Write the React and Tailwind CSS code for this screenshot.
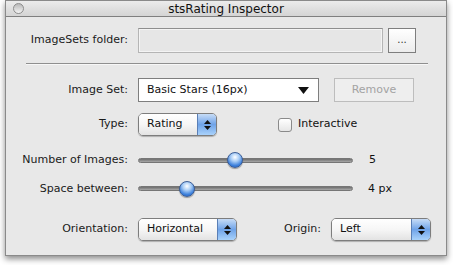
import React from "react";

const font = { fontFamily: '"DejaVu Sans", "Liberation Sans", sans-serif' };

const Label = ({ children, w = "w-[132px]" }) => (
  <div className={`${w} shrink-0 whitespace-nowrap text-right pr-[10px] text-[11px] text-[#1a1a1a]`}>{children}</div>
);

const AquaPopup = ({ value, w }) => (
  <div className={`${w} h-[23px] shrink-0 flex rounded-[5px] border border-[#7d7d7d] overflow-hidden shadow-[0_1px_1px_rgba(0,0,0,0.25)]`}>
    <div className="flex-1 flex items-center pl-[8px] text-[11px] text-[#111] bg-gradient-to-b from-white via-[#f6f6f6] to-[#e3e3e3]">
      {value}
    </div>
    <div className="w-[19px] flex flex-col items-center justify-center gap-[2px] border-l border-[#5a7fb6] bg-gradient-to-b from-[#c7dcf6] via-[#6fa3e8] to-[#a9d2fb]">
      <svg width="7" height="4" viewBox="0 0 7 4"><path d="M3.5 0 L7 4 L0 4 Z" fill="#111" /></svg>
      <svg width="7" height="4" viewBox="0 0 7 4"><path d="M0 0 L7 0 L3.5 4 Z" fill="#111" /></svg>
    </div>
  </div>
);

const Slider = ({ pos }) => (
  <div className="relative w-[215px] h-[16px] shrink-0 flex items-center">
    <div className="w-full h-[5px] rounded-full bg-gradient-to-b from-[#6e6e6e] to-[#a9a9a9] border border-[#767676]" />
    <div
      className="absolute top-[0px] w-[16px] h-[16px] rounded-full border border-[#3c5e97] bg-[radial-gradient(circle_at_50%_30%,#ffffff_0%,#a9cdf6_35%,#3b7fdb_70%,#2d62b8_100%)] shadow-[0_1px_1px_rgba(0,0,0,0.35)]"
      style={{ left: pos }}
    />
  </div>
);

export default function App() {
  return (
    <div className="w-[453px] h-[265px] bg-white" style={font}>
      <div className="ml-[5px] w-[442px] h-[256px] flex flex-col bg-[#e8e8e8] border border-[#8a8a8a] shadow-[0_3px_6px_rgba(0,0,0,0.45)]">
        <div className="h-[16px] shrink-0 relative flex items-center justify-center bg-gradient-to-b from-[#ececec] to-[#d4d4d4] border-b border-[#7f7f7f]">
          <div className="absolute left-[7px] top-[2px] w-[11px] h-[11px] rounded-full border border-[#8d8d8d] bg-gradient-to-b from-[#b9b9b9] to-[#f4f4f4]" />
          <span className="text-[12px] text-[#111] leading-none">stsRating Inspector</span>
        </div>

        <div className="flex items-center mt-[11px]">
          <Label>ImageSets folder:</Label>
          <div className="w-[245px] h-[25px] shrink-0 border border-[#b5b5b5] border-t-[#8e8e8e] bg-[#e6e6e6] shadow-[inset_0_0_0_1px_#f4f4f4]" />
          <div className="ml-[5px] w-[28px] h-[25px] shrink-0 border border-[#7e7e7e] bg-gradient-to-b from-white to-[#ececec] flex items-center justify-center text-[10px] text-[#333] leading-none pb-[2px]">
            ...
          </div>
        </div>

        <div className="mt-[10px] ml-[20px] w-[402px] h-px bg-[#8f8f8f] border-b border-[#f7f7f7] box-content" />

        <div className="flex items-center mt-[13px]">
          <Label>Image Set:</Label>
          <div className="w-[181px] h-[24px] shrink-0 border border-[#7e7e7e] bg-white flex items-center justify-between pl-[8px] pr-[9px] text-[11px] text-[#111]">
            <span>Basic Stars (16px)</span>
            <svg width="11" height="7" viewBox="0 0 11 7"><path d="M0 0 L11 0 L5.5 7 Z" fill="#111" /></svg>
          </div>
          <div className="ml-[15px] w-[80px] h-[24px] shrink-0 border border-[#bdbdbd] bg-[#eeeeee] flex items-center justify-center text-[11px] text-[#a3a3a3]">
            Remove
          </div>
        </div>

        <div className="flex items-center mt-[11px]">
          <Label>Type:</Label>
          <AquaPopup value="Rating" w="w-[79px]" />
          <div className="ml-[61px] w-[14px] h-[14px] shrink-0 rounded-[3px] border border-[#8a8a8a] bg-gradient-to-b from-white to-[#e6e6e6]" />
          <span className="ml-[6px] text-[11px] text-[#111]">Interactive</span>
        </div>

        <div className="flex items-center mt-[16px]">
          <Label>Number of Images:</Label>
          <Slider pos="89px" />
          <span className="ml-[16px] text-[11px] text-[#111]">5</span>
        </div>

        <div className="flex items-center mt-[12px]">
          <Label>Space between:</Label>
          <Slider pos="41px" />
          <span className="ml-[15px] text-[11px] text-[#111]">4 px</span>
        </div>

        <div className="flex items-center mt-[21px]">
          <Label>Orientation:</Label>
          <AquaPopup value="Horizontal" w="w-[99px]" />
          <Label w="w-[94px]">Origin:</Label>
          <AquaPopup value="Left" w="w-[100px]" />
        </div>
      </div>
    </div>
  );
}
